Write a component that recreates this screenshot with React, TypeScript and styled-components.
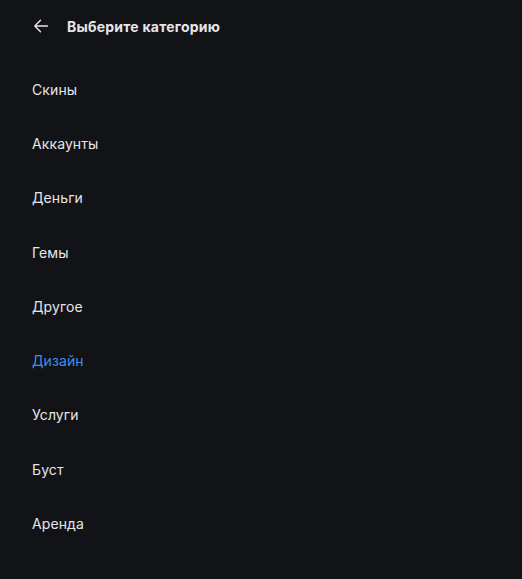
import React, { useState } from 'react';
import styled, { createGlobalStyle } from 'styled-components';

const categories = ['Скины', 'Аккаунты', 'Деньги', 'Гемы', 'Другое', 'Дизайн', 'Услуги', 'Буст', 'Аренда'];

const App = () => {
  const [active, setActive] = useState('Дизайн');

  return (
    <>
      <GlobalStyle />
      <Page>
        <Header>
          <BackButton aria-label="Назад">
            <svg width="16" height="16" viewBox="0 0 16 16" fill="none">
              <path d="M14.5 8H1.8M7.5 2.2L1.8 8l5.7 5.8" stroke="#e8e8ea" strokeWidth="1.4" strokeLinecap="round" strokeLinejoin="round" />
            </svg>
          </BackButton>
          <Title>Выберите категорию</Title>
        </Header>
        <List>
          {categories.map((name) => (
            <Item key={name} $active={name === active} onClick={() => setActive(name)}>
              {name}
            </Item>
          ))}
        </List>
      </Page>
    </>
  );
};

export default App;

const GlobalStyle = createGlobalStyle`
  * {
    margin: 0;
    padding: 0;
    box-sizing: border-box;
  }
  body {
    font-family: Inter, 'Noto Sans', sans-serif;
    background-color: #121317;
  }
`;

const Page = styled.div`
  width: 522px;
  height: 579px;
  background: #121317;
  display: flex;
  flex-direction: column;
`;

const Header = styled.div`
  display: flex;
  align-items: center;
  height: 52px;
  padding: 0 0 0 33px;
  gap: 18px;
`;

const BackButton = styled.button`
  display: flex;
  align-items: center;
  justify-content: center;
  width: 16px;
  height: 16px;
  background: none;
  border: none;
  cursor: pointer;
`;

const Title = styled.h1`
  font-size: 14px;
  font-weight: 700;
  letter-spacing: 0.22px;
  color: #e6e6e9;
`;

const List = styled.div`
  display: flex;
  flex-direction: column;
  padding: 10px 0 0 32px;
`;

const Item = styled.div<{ $active: boolean }>`
  height: 54.3px;
  display: flex;
  align-items: center;
  font-size: 14px;
  font-weight: 400;
  letter-spacing: 0.1px;
  color: ${(p) => (p.$active ? '#3d8ff0' : '#e6e6e9')};
  cursor: pointer;
`;
